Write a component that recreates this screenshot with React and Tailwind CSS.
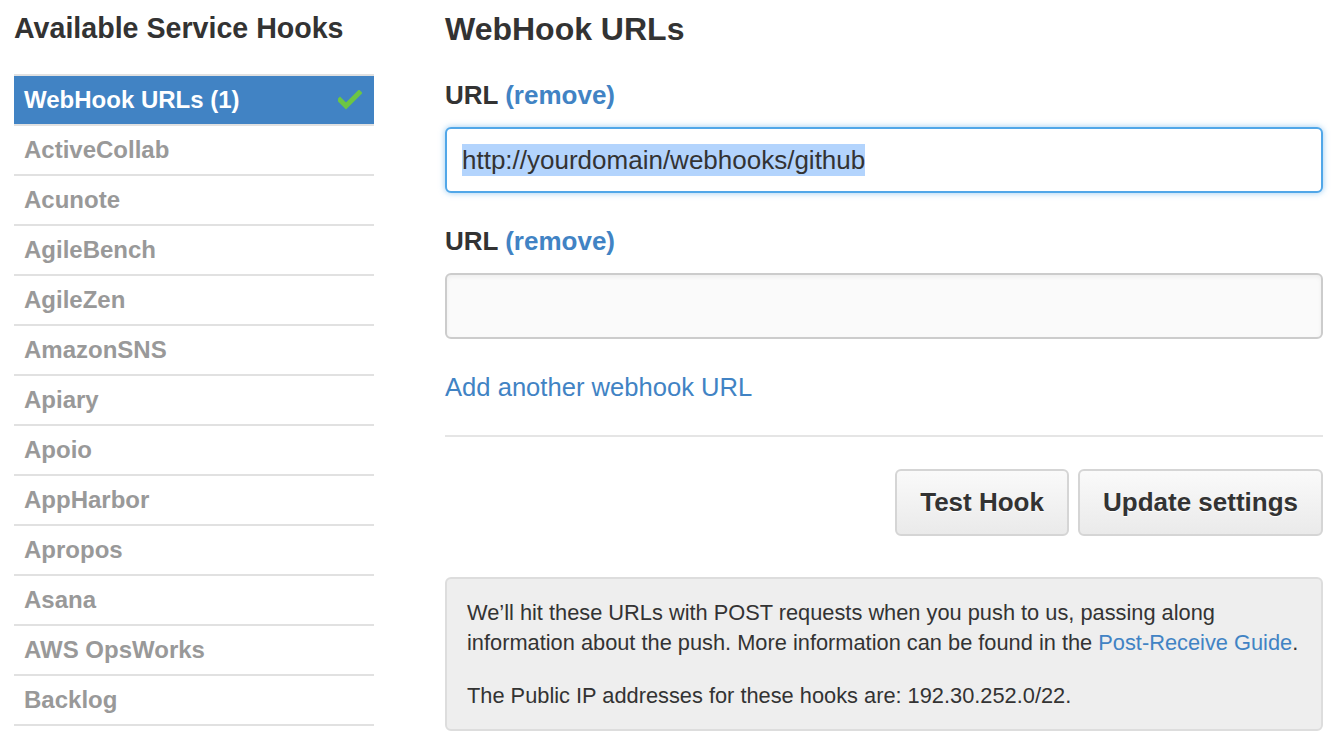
import React from "react";

const services = [
  "ActiveCollab",
  "Acunote",
  "AgileBench",
  "AgileZen",
  "AmazonSNS",
  "Apiary",
  "Apoio",
  "AppHarbor",
  "Apropos",
  "Asana",
  "AWS OpsWorks",
  "Backlog",
];

function Check() {
  return (
    <svg width="24" height="20" viewBox="0 0 24 20" className="shrink-0">
      <polyline
        points="2,10 8,16 21,3"
        fill="none"
        stroke="#6cc644"
        strokeWidth="5"
        strokeLinecap="square"
      />
    </svg>
  );
}

function Sidebar() {
  return (
    <aside className="w-[360px] shrink-0">
      <h2 className="mt-[12px] text-[28.6px] leading-[32px] font-bold text-[#333]">
        Available Service Hooks
      </h2>
      <ul className="mt-[30px] border-t-2 border-[#e1e1e1]">
        <li className="flex h-[50px] items-center justify-between border-b-2 border-[#e1e1e1]">
          <div className="flex h-[48px] w-full items-center justify-between bg-[#4183c4] pl-[10px] pr-[12px]">
            <span className="text-[24px] font-bold text-white">WebHook URLs (1)</span>
            <Check />
          </div>
        </li>
        {services.map((s) => (
          <li
            key={s}
            className="flex h-[50px] items-center border-b-2 border-[#e1e1e1] pl-[10px] text-[24px] font-bold text-[#999]"
          >
            {s}
          </li>
        ))}
      </ul>
    </aside>
  );
}

function Label() {
  return (
    <div className="text-[26px] leading-[32px] font-bold text-[#333]">
      URL <a className="text-[#4183c4]">(remove)</a>
    </div>
  );
}

export default function App() {
  return (
    <div
      className="flex min-h-[738px] gap-[71px] bg-white pl-[14px] pr-[15px]"
      style={{ fontFamily: '"Liberation Sans", Arial, Helvetica, sans-serif' }}
    >
      <Sidebar />
      <main className="flex-1">
        <h1 className="mt-[9px] text-[32px] leading-[40px] font-bold text-[#333]">
          WebHook URLs
        </h1>

        <div className="mt-[30px]">
          <Label />
          <div className="mt-[16px] flex h-[66px] items-center rounded-[6px] border-2 border-[#51a7e8] bg-white pl-[15px] shadow-[0_0_6px_rgba(81,167,232,0.6)]">
            <span className="bg-[#b3d4fd] text-[26px] leading-[32px] text-[#333]">
              http://yourdomain/webhooks/github
            </span>
          </div>
        </div>

        <div className="mt-[32px]">
          <Label />
          <div className="mt-[16px] h-[66px] rounded-[6px] border-2 border-[#cccccc] bg-[#fafafa] shadow-[inset_0_2px_4px_rgba(0,0,0,0.05)]"></div>
        </div>

        <a className="mt-[32px] block text-[25.6px] leading-[32px] text-[#4183c4]">
          Add another webhook URL
        </a>

        <div className="mt-[32px] h-[2px] bg-[#e5e5e5]"></div>

        <div className="mt-[32px] flex justify-end gap-[9px]">
          <button className="h-[67px] rounded-[6px] border-2 border-[#d5d5d5] bg-gradient-to-b from-[#fafafa] to-[#eaeaea] px-[23px] text-[26px] font-bold text-[#333] [text-shadow:0_1px_0_#fff]">
            Test Hook
          </button>
          <button className="h-[67px] rounded-[6px] border-2 border-[#d5d5d5] bg-gradient-to-b from-[#fafafa] to-[#eaeaea] px-[23px] text-[26px] font-bold text-[#333] [text-shadow:0_1px_0_#fff]">
            Update settings
          </button>
        </div>

        <div className="mt-[41px] rounded-[6px] border-2 border-[#dddddd] bg-[#eeeeee] pl-[20px] pr-[8px] pt-[19px] pb-[18px] text-[21.8px] leading-[30px] text-[#333]">
          <p>
            We’ll hit these URLs with POST requests when you push to us, passing along
            information about the push. More information can be found in the{" "}
            <a className="text-[#4183c4]">Post-Receive Guide</a>.
          </p>
          <p className="mt-[23px]">
            The Public IP addresses for these hooks are: 192.30.252.0/22.
          </p>
        </div>
      </main>
    </div>
  );
}
